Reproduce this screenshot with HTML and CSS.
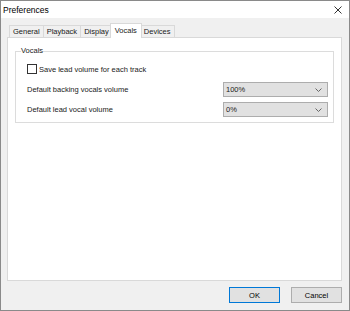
FILE: index.html
```
<!DOCTYPE html>
<html lang="en">
<head>
    <meta charset="UTF-8">
    <title>Preferences</title>
    <link rel="stylesheet" href="styles.css">
</head>
<body>
    <div class="window">
        <div class="titlebar">
            <span class="title">Preferences</span>
            <svg class="close" width="8" height="8" viewBox="0 0 8 8">
                <path d="M0.5 0.5 L7.5 7.5 M7.5 0.5 L0.5 7.5" stroke="#333" stroke-width="1"/>
            </svg>
        </div>
        <div class="main">
            <div class="tabs">
                <span class="tab">General</span>
                <span class="tab">Playback</span>
                <span class="tab">Display</span>
                <span class="tab active">Vocals</span>
                <span class="tab">Devices</span>
            </div>
            <div class="panel">
                <fieldset class="group">
                    <legend>Vocals</legend>
                    <div class="rows">
                        <div class="row check-row">
                            <span class="checkbox"></span>
                            <span>Save lead volume for each track</span>
                        </div>
                        <div class="row">
                            <span>Default backing vocals volume</span>
                            <div class="select">
                                <span>100%</span>
                                <svg width="7" height="4" viewBox="0 0 7 4"><path d="M0.5 0.5 L3.5 3.5 L6.5 0.5" fill="none" stroke="#666" stroke-width="1"/></svg>
                            </div>
                        </div>
                        <div class="row">
                            <span>Default lead vocal volume</span>
                            <div class="select">
                                <span>0%</span>
                                <svg width="7" height="4" viewBox="0 0 7 4"><path d="M0.5 0.5 L3.5 3.5 L6.5 0.5" fill="none" stroke="#666" stroke-width="1"/></svg>
                            </div>
                        </div>
                    </div>
                </fieldset>
            </div>
        </div>
        <div class="footer">
            <button class="button default">OK</button>
            <button class="button">Cancel</button>
        </div>
    </div>
</body>
</html>
```
FILE: styles.css
```
body {
    margin: 0;
    font-family: 'Liberation Sans', Arial, sans-serif;
    font-size: 7.5px;
    color: #1a1a1a;
}

.window {
    width: 350px;
    height: 311px;
    box-sizing: border-box;
    border: 1px solid #8a8a8a;
    background-color: #f0f0f0;
    display: flex;
    flex-direction: column;
}

.titlebar {
    height: 17px;
    background-color: #fff;
    display: flex;
    align-items: center;
    justify-content: space-between;
    padding: 0 7px 0 2px;
}

.title {
    font-size: 8.5px;
    color: #000;
}

.main {
    flex: 1;
    display: flex;
    flex-direction: column;
    padding: 5px 7px 0 6px;
}

.tabs {
    display: flex;
    align-items: flex-end;
    height: 14px;
    padding-left: 2px;
}

.tab {
    height: 12px;
    box-sizing: border-box;
    border: 1px solid #d9d9d9;
    border-bottom: none;
    margin-right: -1px;
    padding: 0 3px;
    line-height: 11px;
    background-color: #f0f0f0;
}

.tab.active {
    height: 15px;
    background-color: #fff;
    margin: 0 -2px -1px -2px;
    padding: 0 4px;
    position: relative;
    line-height: 13px;
}

.panel {
    flex: 1;
    background-color: #fff;
    border: 1px solid #d9d9d9;
    padding: 8px 7px;
}

.group {
    margin: 0;
    border: 1px solid #dcdcdc;
    padding: 0 5px 5px 5px;
}

.group legend {
    padding: 0;
    line-height: 10px;
}

.rows {
    display: flex;
    flex-direction: column;
    gap: 5px;
    padding-top: 8px;
}

.row {
    display: flex;
    align-items: center;
    justify-content: space-between;
    padding-left: 6px;
    height: 15px;
}

.check-row {
    justify-content: flex-start;
    height: 10px;
    margin-bottom: 3px;
}

.checkbox {
    width: 10px;
    height: 10px;
    box-sizing: border-box;
    border: 1px solid #333;
    background-color: #fff;
    margin-right: 2px;
}

.select {
    width: 105px;
    height: 15px;
    box-sizing: border-box;
    background-color: #e1e1e1;
    border: 1px solid #adadad;
    display: flex;
    align-items: center;
    justify-content: space-between;
    padding: 0 5px 0 2px;
}

.footer {
    display: flex;
    justify-content: flex-end;
    gap: 11px;
    padding: 6px 7px 7px 0;
}

.button {
    width: 51px;
    height: 16px;
    box-sizing: border-box;
    background-color: #e1e1e1;
    border: 1px solid #adadad;
    font-family: 'Liberation Sans', Arial, sans-serif;
    font-size: 7.5px;
    padding: 0;
    color: #000;
}

.button.default {
    border-color: #0078d7;
}
```
